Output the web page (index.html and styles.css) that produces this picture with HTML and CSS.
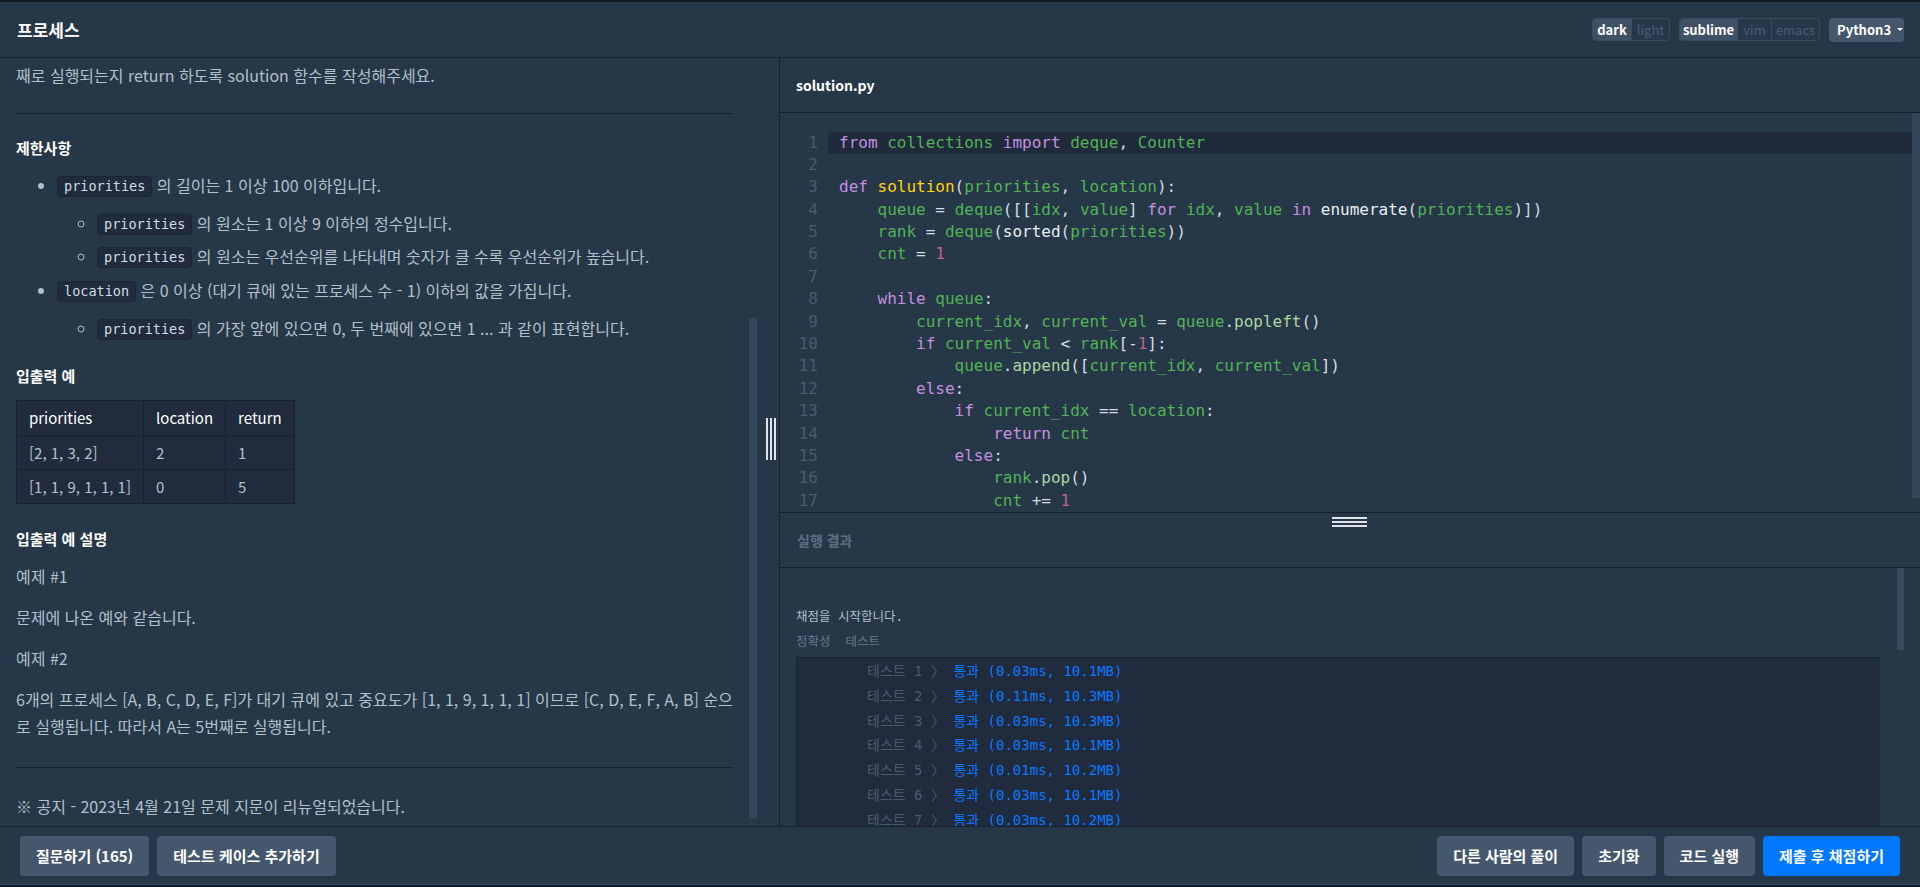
FILE: index.html
```html
<!DOCTYPE html>
<html lang="ko">
<head>
<meta charset="utf-8">
<title>프로세스</title>
<link rel="stylesheet" href="styles.css">
</head>
<body>
<header class="topbar">
  <h1 class="title">프로세스</h1>
  <div class="tools">
    <div class="seg-group"><span class="seg on w-dark">dark</span><span class="seg w-light">light</span></div>
    <div class="seg-group"><span class="seg on w-sub">sublime</span><span class="seg w-vim">vim</span><span class="seg w-emacs">emacs</span></div>
    <div class="lang">Python3 <span class="caret"></span></div>
  </div>
</header>

<main class="main">
  <section class="left">
    <div class="desc">
      <p class="p0">째로 실행되는지 return 하도록 solution 함수를 작성해주세요.</p>
      <hr class="rule first">
      <h5 class="h">제한사항</h5>
      <ul class="l1">
        <li><code>priorities</code> 의 길이는 1 이상 100 이하입니다.
          <ul class="l2">
            <li><code>priorities</code> 의 원소는 1 이상 9 이하의 정수입니다.</li>
            <li><code>priorities</code> 의 원소는 우선순위를 나타내며 숫자가 클 수록 우선순위가 높습니다.</li>
          </ul>
        </li>
        <li><code>location</code> 은 0 이상 (대기 큐에 있는 프로세스 수 - 1) 이하의 값을 가집니다.
          <ul class="l2">
            <li><code>priorities</code> 의 가장 앞에 있으면 0, 두 번째에 있으면 1 ... 과 같이 표현합니다.</li>
          </ul>
        </li>
      </ul>
      <h5 class="h h2">입출력 예</h5>
      <table class="io">
        <thead>
          <tr><th>priorities</th><th>location</th><th>return</th></tr>
        </thead>
        <tbody>
          <tr><td>[2, 1, 3, 2]</td><td>2</td><td>1</td></tr>
          <tr><td>[1, 1, 9, 1, 1, 1]</td><td>0</td><td>5</td></tr>
        </tbody>
      </table>
      <h5 class="h h3">입출력 예 설명</h5>
      <p class="tp">예제 #1</p>
      <p class="tp">문제에 나온 예와 같습니다.</p>
      <p class="tp">예제 #2</p>
      <p class="tp">6개의 프로세스 [A, B, C, D, E, F]가 대기 큐에 있고 중요도가 [1, 1, 9, 1, 1, 1] 이므로 [C, D, E, F, A, B] 순으로 실행됩니다. 따라서 A는 5번째로 실행됩니다.</p>
      <hr class="rule second">
      <p class="tp notice">※ 공지 - 2023년 4월 21일 문제 지문이 리뉴얼되었습니다.</p>
    </div>
    <div class="thumb left-thumb"></div>
    <div class="vhandle"><i></i><i></i><i></i></div>
  </section>

  <section class="right">
    <div class="ed-head">solution.py</div>
    <div class="editor">
      <div class="code">
        <div class="ln active"><span class="g">1</span><span class="t"><span class="k">from</span> <span class="v">collections</span> <span class="k">import</span> <span class="v">deque</span><span class="p">,</span> <span class="v">Counter</span></span></div>
        <div class="ln"><span class="g">2</span><span class="t"> </span></div>
        <div class="ln"><span class="g">3</span><span class="t"><span class="k">def</span> <span class="f">solution</span><span class="p">(</span><span class="v">priorities</span><span class="p">,</span> <span class="v">location</span><span class="p">):</span></span></div>
        <div class="ln"><span class="g">4</span><span class="t">    <span class="v">queue</span> <span class="p">=</span> <span class="v">deque</span><span class="p">([[</span><span class="v">idx</span><span class="p">,</span> <span class="v">value</span><span class="p">]</span> <span class="k">for</span> <span class="v">idx</span><span class="p">,</span> <span class="v">value</span> <span class="k">in</span> <span class="b">enumerate</span><span class="p">(</span><span class="v">priorities</span><span class="p">)])</span></span></div>
        <div class="ln"><span class="g">5</span><span class="t">    <span class="v">rank</span> <span class="p">=</span> <span class="v">deque</span><span class="p">(</span><span class="b">sorted</span><span class="p">(</span><span class="v">priorities</span><span class="p">))</span></span></div>
        <div class="ln"><span class="g">6</span><span class="t">    <span class="v">cnt</span> <span class="p">=</span> <span class="n">1</span></span></div>
        <div class="ln"><span class="g">7</span><span class="t"> </span></div>
        <div class="ln"><span class="g">8</span><span class="t">    <span class="k">while</span> <span class="v">queue</span><span class="p">:</span></span></div>
        <div class="ln"><span class="g">9</span><span class="t">        <span class="v">current_idx</span><span class="p">,</span> <span class="v">current_val</span> <span class="p">=</span> <span class="v">queue</span><span class="p">.</span><span class="m">popleft</span><span class="p">()</span></span></div>
        <div class="ln"><span class="g">10</span><span class="t">        <span class="k">if</span> <span class="v">current_val</span> <span class="p">&lt;</span> <span class="v">rank</span><span class="p">[-</span><span class="n">1</span><span class="p">]:</span></span></div>
        <div class="ln"><span class="g">11</span><span class="t">            <span class="v">queue</span><span class="p">.</span><span class="m">append</span><span class="p">([</span><span class="v">current_idx</span><span class="p">,</span> <span class="v">current_val</span><span class="p">])</span></span></div>
        <div class="ln"><span class="g">12</span><span class="t">        <span class="k">else</span><span class="p">:</span></span></div>
        <div class="ln"><span class="g">13</span><span class="t">            <span class="k">if</span> <span class="v">current_idx</span> <span class="p">==</span> <span class="v">location</span><span class="p">:</span></span></div>
        <div class="ln"><span class="g">14</span><span class="t">                <span class="k">return</span> <span class="v">cnt</span></span></div>
        <div class="ln"><span class="g">15</span><span class="t">            <span class="k">else</span><span class="p">:</span></span></div>
        <div class="ln"><span class="g">16</span><span class="t">                <span class="v">rank</span><span class="p">.</span><span class="m">pop</span><span class="p">()</span></span></div>
        <div class="ln"><span class="g">17</span><span class="t">                <span class="v">cnt</span> <span class="p">+=</span> <span class="n">1</span></span></div>
      </div>
      <div class="thumb ed-thumb"></div>
    </div>
    <div class="res-head">실행 결과<div class="hhandle"><i></i><i></i><i></i></div></div>
    <div class="res-body">
      <div class="console">채점을 시작합니다.</div>
      <div class="console dim">정확성  테스트</div>
      <div class="tests">
        <div class="row"><span class="tn">테스트 1 〉</span> <span class="ok">통과 (0.03ms, 10.1MB)</span></div>
        <div class="row"><span class="tn">테스트 2 〉</span> <span class="ok">통과 (0.11ms, 10.3MB)</span></div>
        <div class="row"><span class="tn">테스트 3 〉</span> <span class="ok">통과 (0.03ms, 10.3MB)</span></div>
        <div class="row"><span class="tn">테스트 4 〉</span> <span class="ok">통과 (0.03ms, 10.1MB)</span></div>
        <div class="row"><span class="tn">테스트 5 〉</span> <span class="ok">통과 (0.01ms, 10.2MB)</span></div>
        <div class="row"><span class="tn">테스트 6 〉</span> <span class="ok">통과 (0.03ms, 10.1MB)</span></div>
        <div class="row"><span class="tn">테스트 7 〉</span> <span class="ok">통과 (0.03ms, 10.2MB)</span></div>
      </div>
      <div class="thumb res-thumb"></div>
    </div>
  </section>
</main>

<footer class="footer">
  <div class="btns">
    <button class="btn">질문하기 (165)</button>
    <button class="btn">테스트 케이스 추가하기</button>
  </div>
  <div class="btns">
    <button class="btn">다른 사람의 풀이</button>
    <button class="btn">초기화</button>
    <button class="btn">코드 실행</button>
    <button class="btn primary">제출 후 채점하기</button>
  </div>
</footer>
<div class="bottom-strip"></div>
</body>
</html>
```

FILE: styles.css
```css
* { box-sizing: border-box; }
html, body { margin: 0; padding: 0; }
body {
  width: 1920px;
  height: 887px;
  overflow: hidden;
  background: #263747;
  color: #b2c0cc;
  font-family: "Noto Sans CJK KR", "Noto Sans", sans-serif;
  display: flex;
  flex-direction: column;
}

/* top bar */
.topbar {
  flex: none;
  height: 58px;
  border-top: 2px solid #0f1720;
  border-bottom: 1px solid #172030;
  display: flex;
  align-items: center;
  justify-content: space-between;
  padding: 0 16px 0 17px;
}
.title {
  margin: 0;
  font-size: 17px;
  font-weight: 700;
  color: #ffffff;
  line-height: 22px;
}
.tools { display: flex; align-items: center; gap: 9px; }
.seg-group {
  display: flex;
  height: 23px;
  border: 1px solid #3a4b5e;
  border-radius: 4px;
  overflow: hidden;
  background: #27384a;
}
.seg {
  font-size: 13px;
  line-height: 21px;
  text-align: center;
  color: #4c5d70;
}
.seg + .seg { border-left: 1px solid #3a4b5e; }
.seg.on { background: #3f5165; color: #ffffff; font-weight: 700; }
.w-dark { width: 38px; }
.w-light { width: 38px; }
.w-sub { width: 57px; }
.w-vim { width: 34px; }
.w-emacs { width: 48px; }
.lang {
  height: 24px;
  width: 75px;
  padding: 0 0 0 8px;
  background: #44576c;
  border-radius: 4px;
  color: #ffffff;
  font-size: 13px;
  font-weight: 700;
  line-height: 24px;
  display: flex;
  align-items: center;
  gap: 6px;
}
.caret {
  width: 0; height: 0;
  border-left: 3px solid transparent;
  border-right: 3px solid transparent;
  border-top: 3px solid #ffffff;
}

/* main */
.main { flex: none; height: 768px; display: flex; }
.left {
  position: relative;
  width: 780px;
  flex: none;
  border-right: 1px solid #172030;
  overflow: hidden;
}
.desc { padding: 4px 46px 0 16px; font-size: 16px; line-height: 27px; }
.desc p { margin: 0; }
.rule { border: 0; border-top: 1px solid #172030; margin: 0; height: 0; }
.rule.first { margin-top: 24px; }
.rule.second { margin-top: 27px; }
.h { margin: 22px 0 0; font-size: 15px; line-height: 24px; font-weight: 700; color: #ffffff; }
.h2 { margin-top: 22px; }
.h3 { margin-top: 23px; }
.l1 { margin: 12px 0 0; padding-left: 41px; list-style: disc; }
.l1 > li + li { margin-top: 7px; }
.l2 { margin: 11px 0 0; padding-left: 40px; list-style: circle; }
.l2 > li + li { margin-top: 6px; }
code {
  font-family: "DejaVu Sans Mono", monospace;
  font-size: 13.5px;
  line-height: 17px;
  display: inline-block;
  vertical-align: 1px;
  background: #202b3d;
  border: 1px solid #1b2535;
  border-radius: 4px;
  padding: 1px 6px;
  color: #d3dce4;
}
.io {
  margin-top: 12px;
  border-collapse: collapse;
  background: #202b3d;
  font-size: 15px;
}
.io th, .io td {
  border: 1px solid #172030;
  height: 34px;
  padding: 0 12px;
  text-align: left;
  font-weight: 400;
  line-height: 24px;
  white-space: nowrap;
}
.io th { color: #ffffff; height: 35px; }
.io td { color: #b2c0cc; }
.tp { margin-top: 14px !important; }
.h3 + .tp { margin-top: 12px !important; }
.notice { margin-top: 25px !important; }

.thumb { position: absolute; background: #34465a; }
.left-thumb { left: 749px; top: 260px; width: 8px; height: 501px; }
.vhandle {
  position: absolute;
  left: 766px;
  top: 360px;
  height: 42px;
  display: flex;
  gap: 2px;
}
.vhandle i { display: block; width: 2px; height: 100%; background: #dde3e8; }

/* right */
.right { flex: 1; display: flex; flex-direction: column; min-width: 0; }
.ed-head {
  flex: none;
  height: 55px;
  border-bottom: 1px solid #172030;
  padding-left: 16px;
  display: flex;
  align-items: center;
  font-size: 14px;
  font-weight: 700;
  color: #ffffff;
}
.editor {
  position: relative;
  flex: none;
  height: 400px;
  border-bottom: 1px solid #172030;
  overflow: hidden;
  padding: 18.5px 8px 0 0;
}
.code { font-family: "DejaVu Sans Mono", monospace; font-size: 16px; }
.ln { display: flex; height: 22.4px; line-height: 22.4px; }
.g { flex: none; width: 48px; padding-right: 10px; text-align: right; color: #4a5b6e; }
.t { flex: 1; padding-left: 11px; white-space: pre; color: #d3dce4; }
.ln.active .t { background: #1f2a3b; }
.k { color: #c48fe0; }
.v { color: #52b256; }
.f { color: #fbd515; }
.b { color: #e9eef2; }
.p { color: #d3dce4; }
.n { color: #c0628c; }
.m { color: #acd6a4; }
.ed-thumb { right: 0; top: 0; width: 8px; height: 385px; }

.res-head {
  position: relative;
  flex: none;
  height: 55px;
  border-bottom: 1px solid #172030;
  padding-left: 17px;
  display: flex;
  align-items: center;
  font-size: 14px;
  font-weight: 700;
  color: #5c6e81;
}
.hhandle {
  position: absolute;
  left: 552px;
  top: 4px;
  width: 35px;
  display: flex;
  flex-direction: column;
  gap: 2px;
}
.hhandle i { display: block; height: 2px; background: #dde3e8; }
.res-body {
  position: relative;
  flex: 1;
  overflow: hidden;
  padding: 40px 40px 0 16px;
  font-family: "DejaVu Sans Mono", "Noto Sans Mono CJK KR", "Noto Sans CJK KR", monospace;
}
.console { font-size: 12.5px; line-height: 18px; color: #b2c0cc; white-space: pre; }
.console.dim { margin-top: 7px; color: #667889; }
.tests {
  margin-top: 6px;
  background: #202b3d;
  border-top: 1px solid #1a2433;
  border-left: 1px solid #1a2433;
  padding: 1px 0 0 70px;
  min-height: 300px;
  font-size: 14px;
}
.row { height: 24.8px; line-height: 24.8px; white-space: pre; }
.tn { color: #4a5a6c; }
.ok { color: #0b78ff; }
.res-thumb { right: 16px; top: 0; width: 7px; height: 82px; background: #3a4b5f; }

/* footer */
.footer {
  flex: none;
  height: 59px;
  border-top: 1px solid #172030;
  border-bottom: 1px solid #3b4a5c;
  display: flex;
  align-items: center;
  justify-content: space-between;
  padding: 0 20px;
}
.btns { display: flex; gap: 8px; }
.btn {
  height: 40px;
  padding: 0 16px;
  border: 0;
  border-radius: 4px;
  background: #44576c;
  color: #ffffff;
  font-family: "Noto Sans CJK KR", "Noto Sans", sans-serif;
  font-size: 15px;
  font-weight: 700;
}
.btn.primary { background: #0078ff; }
.bottom-strip { flex: none; height: 2px; background: #0f1833; }
```
